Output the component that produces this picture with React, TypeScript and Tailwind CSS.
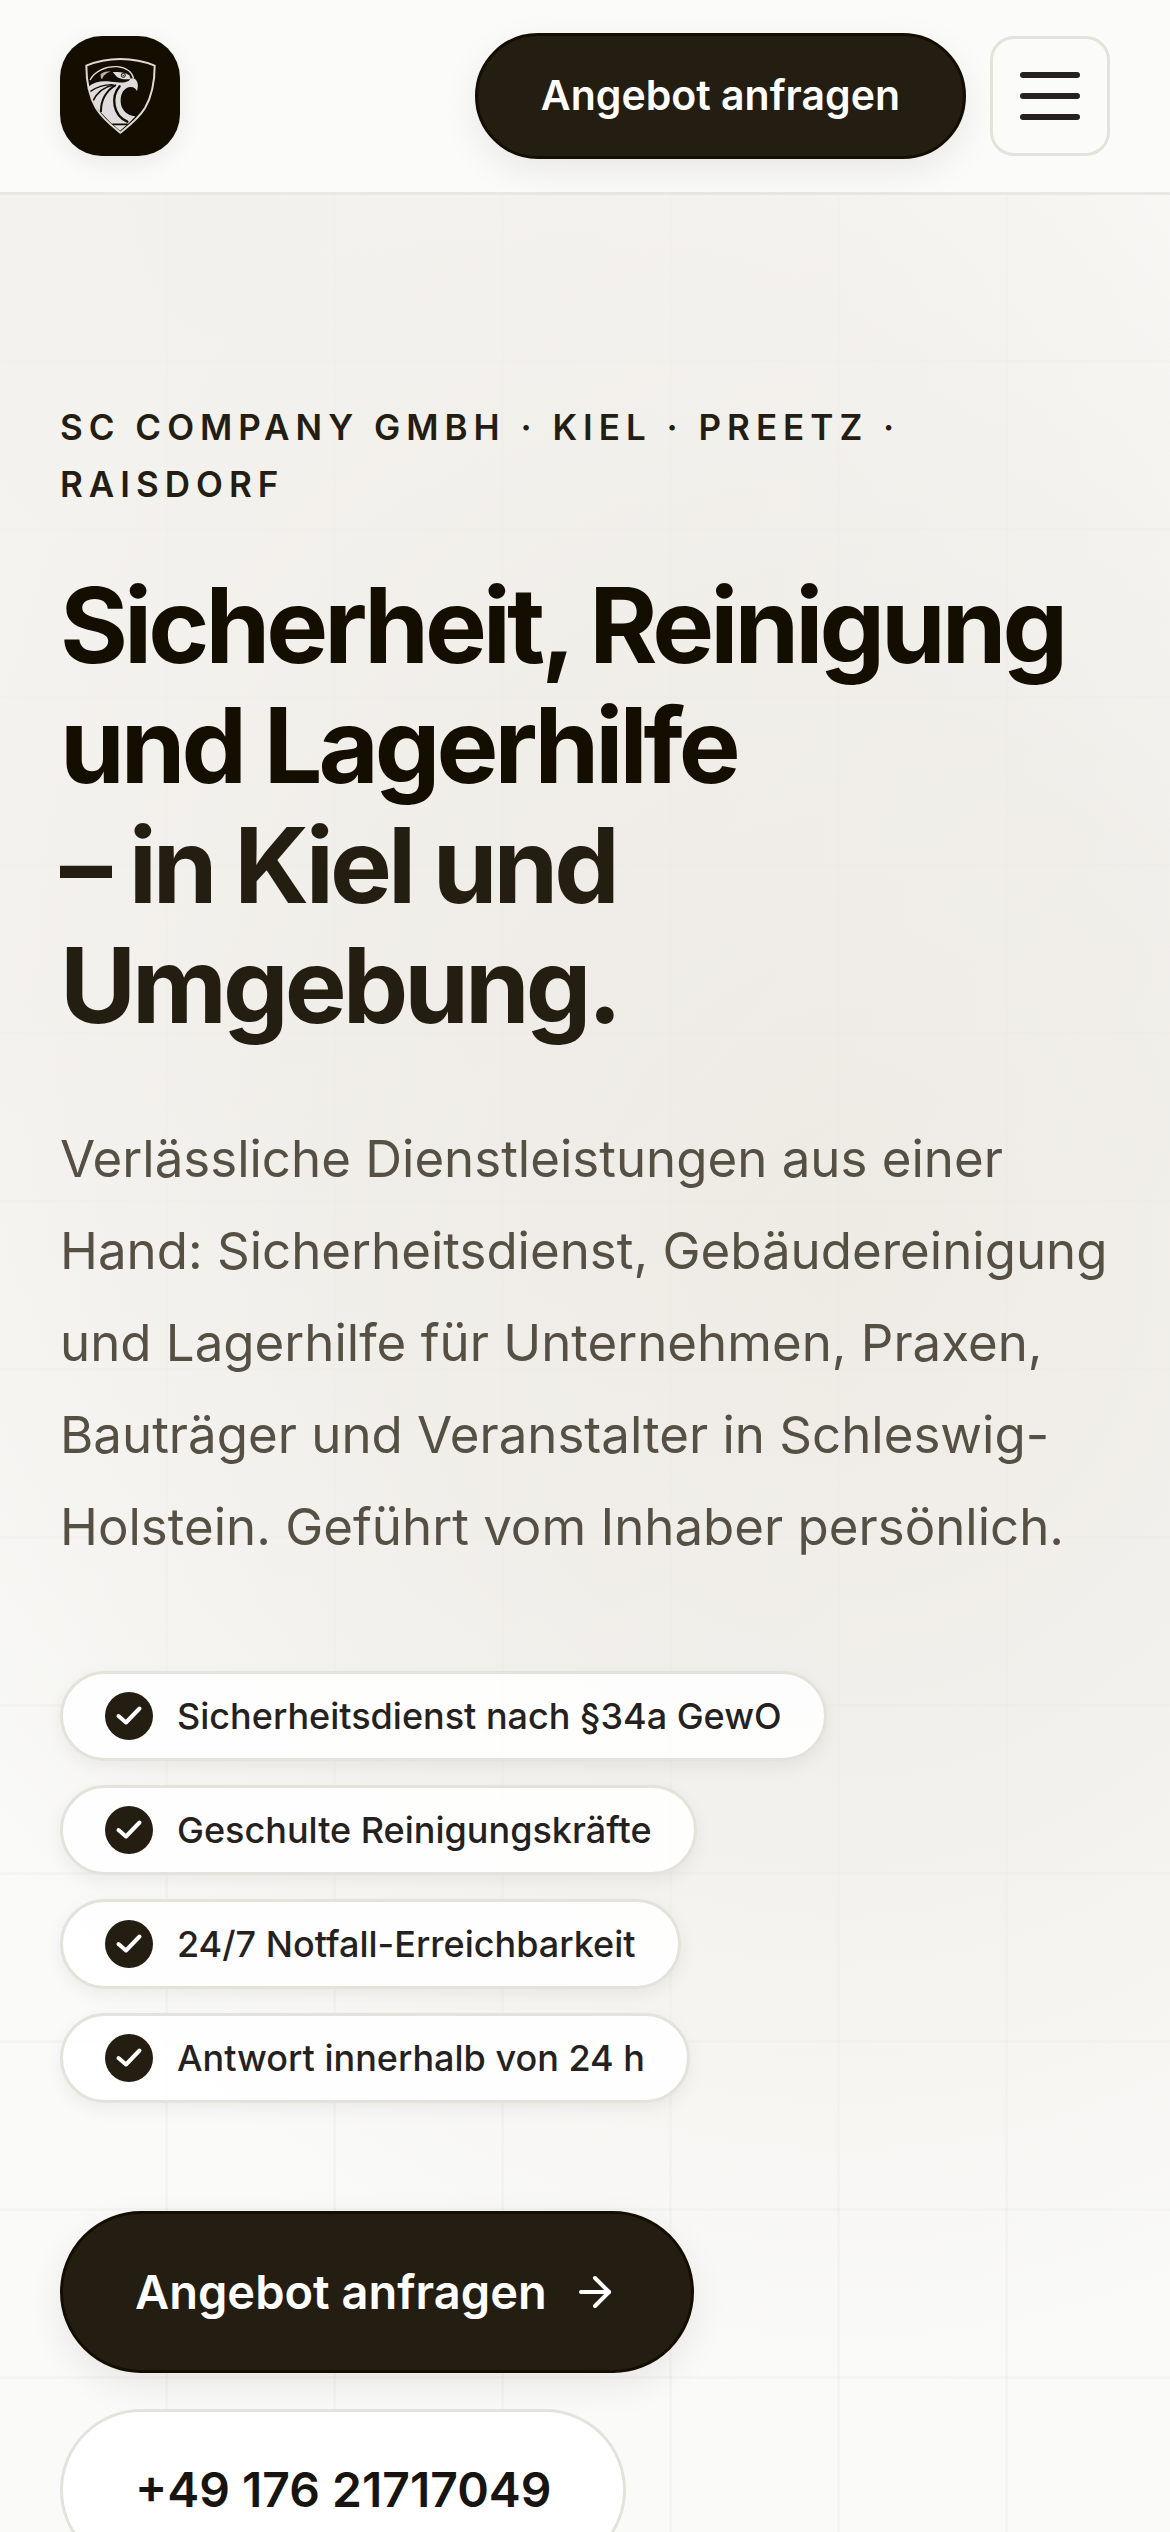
import React from 'react';
import { ArrowRight } from 'lucide-react';

const trustItems = [
  'Sicherheitsdienst nach §34a GewO',
  'Geschulte Reinigungskräfte',
  '24/7 Notfall-Erreichbarkeit',
  'Antwort innerhalb von 24 h',
];

const EagleLogo: React.FC = () => (
  <svg viewBox="-60 -54 360 360" className="w-full h-full" aria-hidden="true">
    {/* Neck and beak */}
    <path
      d="M25 98 C42 84 62 80 84 82 C108 86 134 88 147 80 C149 72 158 70 166 76 C174 84 176 96 171 111 C166 102 160 98 150 99 C132 102 121 118 122 143 C123 165 138 184 166 187 L150 204 L120 230 L90 204 L48 160 L30 122 Z"
      fill="#dedcdd"
    />
    {/* Gaps between the feathers */}
    <g fill="none" stroke="#130e00" strokeLinecap="round">
      <path d="M30 113 C50 99 72 92 96 92" strokeWidth="4" />
      <path d="M38 142 C52 114 74 98 100 93" strokeWidth="5" />
      <path d="M63 172 C62 140 78 110 106 94" strokeWidth="6" />
      <path d="M119 97 C92 128 98 184 142 203" strokeWidth="7" />
      <path d="M98 211 L142 211" strokeWidth="5" />
    </g>
    {/* Head */}
    <path d="M30 78 C44 52 76 36 112 38 C140 41 156 54 161 74" fill="none" stroke="#dedcdd" strokeWidth="4" />
    <path d="M62 60 C70 54 80 52 92 52 C84 56 78 58 76 62 L72 64 L66 76 C62 72 61 66 62 60 Z" fill="#b4b0aa" />
    <path d="M98 55 C112 52 134 54 148 64 L152 74 C140 78 122 76 112 70 Z" fill="#dedcdd" />
    <circle cx="130" cy="64" r="6" fill="#dedcdd" stroke="#130e00" strokeWidth="3" />
    <circle cx="130" cy="64" r="2" fill="#130e00" />
    {/* Shield */}
    <path
      d="M19 35 C52 21 85 15 121 15 C157 15 191 21 224 35 C224 86 217 124 195 162 C174 196 148 214 121 236 C94 214 69 196 48 162 C26 124 19 86 19 35 Z"
      fill="none"
      stroke="#dedad4"
      strokeWidth="6"
      strokeLinejoin="round"
    />
  </svg>
);

const CheckBadge: React.FC = () => (
  <svg viewBox="0 0 48 48" className="size-12 shrink-0" aria-hidden="true">
    <circle cx="24" cy="24" r="24" fill="#241d12" />
    <path
      d="M13.5 24 L21 30.5 L34.5 16.5"
      fill="none"
      stroke="#ffffff"
      strokeWidth="4"
      strokeLinecap="round"
      strokeLinejoin="round"
    />
  </svg>
);

const Header: React.FC = () => (
  <header className="flex items-center justify-between h-[195px] px-[60px] bg-[#fbfbf9] border-b-3 border-[#e8e8e4]">
    <a
      href="#start"
      aria-label="SC Company GmbH"
      className="block size-[120px] rounded-[42px] bg-[#130e00] overflow-hidden shadow-[0_6px_24px_rgba(20,16,8,0.08)]"
    >
      <EagleLogo />
    </a>
    <div className="flex items-center gap-6">
      <a
        href="#kontakt"
        className="flex items-center h-[126px] px-[63px] rounded-full border-3 border-[#130e00] bg-[#241d12] text-white text-[41px] font-semibold shadow-[0_12px_36px_rgba(20,16,8,0.08)]"
      >
        Angebot anfragen
      </a>
      <button
        type="button"
        aria-label="Menü öffnen"
        className="flex flex-col items-center justify-center gap-[15px] size-[120px] rounded-3xl border-3 border-[#e3e3dc]"
      >
        <span className="w-[60px] h-1.5 rounded-sm bg-[#24211e]" />
        <span className="w-[60px] h-1.5 rounded-sm bg-[#24211e]" />
        <span className="w-[60px] h-1.5 rounded-sm bg-[#24211e]" />
      </button>
    </div>
  </header>
);

const Hero: React.FC = () => (
  <section id="start" className="relative px-[60px] pt-[204px] pb-[120px] bg-[#fafaf8]">
    {/* Grid pattern with a warm glow over it */}
    <div className="absolute inset-0 bg-[linear-gradient(to_left,rgba(20,20,20,0.024)_3px,transparent_3px),linear-gradient(to_top,rgba(20,20,20,0.024)_3px,transparent_3px)] bg-[size:168px_168px]" />
    <div className="absolute inset-0 bg-[radial-gradient(ellipse_1000px_1150px_at_72%_42%,rgba(235,231,224,0.75)_0%,rgba(236,233,227,0.6)_45%,rgba(240,238,233,0)_100%),radial-gradient(ellipse_1200px_1700px_at_20%_0%,rgba(241,239,234,0.8)_0%,rgba(241,239,234,0.6)_50%,rgba(241,239,234,0)_100%)]" />

    <div className="relative">
      <p className="text-[35px] leading-[57px] font-semibold tracking-[6px] uppercase text-[#241d12]">
        SC Company GmbH · Kiel · Preetz · Raisdorf
      </p>

      <h1 className="mt-[52px] text-[104px] leading-[120px] font-bold tracking-[-4px] text-[#130e00]">
        Sicherheit, Reinigung und Lagerhilfe
        <span className="block text-[#241d12]">– in Kiel und Umgebung.</span>
      </h1>

      <p className="mt-[68px] text-[51px] leading-[92px] text-[#565044]">
        Verlässliche Dienstleistungen aus einer Hand: Sicherheitsdienst, Gebäudereinigung und Lagerhilfe für
        Unternehmen, Praxen, Bauträger und Veranstalter in Schleswig-Holstein. Geführt vom Inhaber persönlich.
      </p>

      <ul className="mt-[98px] flex flex-col items-start gap-6">
        {trustItems.map((item) => (
          <li
            key={item}
            className="flex items-center gap-6 h-[90px] px-[42px] rounded-full border-3 border-[#e3e3dc] bg-white/90 text-[36px] font-medium text-[#24211e] shadow-[0_6px_18px_rgba(20,16,8,0.06)]"
          >
            <CheckBadge />
            <span>{item}</span>
          </li>
        ))}
      </ul>

      <div className="mt-[108px] flex flex-col items-start gap-9">
        <a
          href="#kontakt"
          className="flex items-center gap-6 h-[162px] px-[72px] rounded-full border-3 border-[#130e00] bg-[#241d12] text-white text-[47px] font-semibold shadow-[0_12px_36px_rgba(20,16,8,0.08)]"
        >
          Angebot anfragen
          <ArrowRight className="size-12" strokeWidth={2} />
        </a>
        <a
          href="tel:+4917621717049"
          className="flex items-center h-[162px] px-[72px] rounded-full border-3 border-[#e3e3dc] bg-white text-[#181510] text-[48px] font-semibold"
        >
          +49 176 21717049
        </a>
      </div>
    </div>
  </section>
);

const App: React.FC = () => {
  return (
    <div lang="de" className="min-h-screen bg-[#fafaf8] font-['Inter',sans-serif] antialiased">
      <Header />
      <main>
        <Hero />
      </main>
    </div>
  );
};

export default App;
